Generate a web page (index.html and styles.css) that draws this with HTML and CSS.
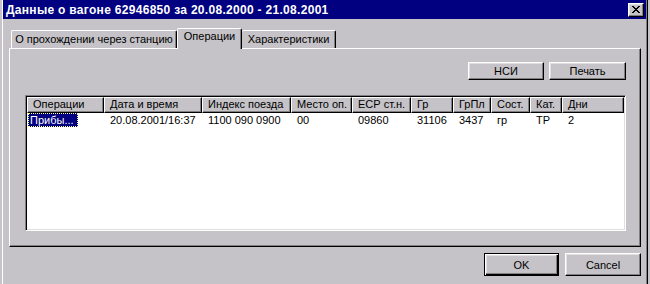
FILE: index.html
```html
<!DOCTYPE html>
<html lang="ru">
<head>
<meta charset="utf-8">
<title>Данные о вагоне</title>
<link rel="stylesheet" href="styles.css">
</head>
<body>
<div class="window">
  <div class="titlebar">
    <span class="title">Данные о вагоне 62946850 за 20.08.2000 - 21.08.2001</span>
    <button class="close" aria-label="Закрыть">
      <svg width="8" height="7" viewBox="0 0 8 7"><path d="M0 0h2v1H0zM6 0h2v1H6zM1 1h2v1H1zM5 1h2v1H5zM2 2h4v1H2zM3 3h2v1H3zM2 4h4v1H2zM1 5h2v1H1zM5 5h2v1H5zM0 6h2v1H0zM6 6h2v1H6z" fill="#000"/></svg>
    </button>
  </div>
  <div class="tabs">
    <div class="tab tab-first">О прохождении через станцию</div>
    <div class="tab tab-active">Операции</div>
    <div class="tab tab-third">Характеристики</div>
  </div>
  <div class="panel">
    <div class="toolbar">
      <button class="btn btn-nsi">НСИ</button>
      <button class="btn btn-print">Печать</button>
    </div>
    <div class="list">
      <div class="grid header">
        <div class="hcell">Операции</div>
        <div class="hcell">Дата и время</div>
        <div class="hcell">Индекс поезда</div>
        <div class="hcell">Место оп.</div>
        <div class="hcell">ЕСР ст.н.</div>
        <div class="hcell">Гр</div>
        <div class="hcell">ГрПл</div>
        <div class="hcell">Сост.</div>
        <div class="hcell">Кат.</div>
        <div class="hcell">Дни</div>
      </div>
      <div class="grid row">
        <div class="cell first"><span class="selected">Прибы...</span></div>
        <div class="cell">20.08.2001/16:37</div>
        <div class="cell">1100 090 0900</div>
        <div class="cell">00</div>
        <div class="cell">09860</div>
        <div class="cell">31106</div>
        <div class="cell">3437</div>
        <div class="cell">гр</div>
        <div class="cell">ТР</div>
        <div class="cell">2</div>
      </div>
    </div>
  </div>
  <div class="footer">
    <button class="btn btn-ok">OK</button>
    <button class="btn btn-cancel">Cancel</button>
  </div>
</div>
</body>
</html>
```
FILE: styles.css
```css
* { box-sizing: border-box; }
html, body { margin: 0; }
body {
  width: 650px;
  height: 284px;
  overflow: hidden;
  padding-left: 2px;
  background: #c5c3c7;
  font: 11px "Liberation Sans", Arial, sans-serif;
  color: #000;
}
.window {
  width: 646px;
  height: 284px;
  border-left: 1px solid #fff;
  border-right: 1px solid #000;
  box-shadow: inset -1px 0 #808080;
  display: flex;
  flex-direction: column;
}
.titlebar {
  height: 19px;
  background: #000080;
  display: flex;
  align-items: center;
  justify-content: space-between;
  padding: 0 2px 0 3px;
  margin-right: 1px;
}
.title {
  color: #fff;
  font-weight: bold;
  font-size: 12px;
  letter-spacing: 0.3px;
}
.close {
  width: 16px;
  height: 14px;
  padding: 0;
  margin: 0;
  background: #c5c3c7;
  border: 1px solid;
  border-color: #fff #000 #000 #fff;
  box-shadow: inset -1px -1px #808080, inset 1px 1px #dfdfdf;
  display: flex;
  align-items: center;
  justify-content: center;
}
.close svg { display: block; }
.tabs {
  display: flex;
  align-items: flex-end;
  height: 20px;
  margin-top: 9px;
  padding-left: 8px;
}
.tab {
  height: 18px;
  border-top: 1px solid #fff;
  border-left: 1px solid #fff;
  border-right: 1px solid #000;
  box-shadow: inset -1px 0 #808080;
  border-radius: 2px 2px 0 0;
  text-align: center;
  line-height: 16px;
  white-space: nowrap;
  background: #c5c3c7;
}
.tab-first { width: 166px; }
.tab-active {
  width: 65px;
  height: 21px;
  margin-bottom: -1px;
  position: relative;
  z-index: 1;
  line-height: 15px;
}
.tab-third { width: 94px; border-left: none; }
.panel {
  margin-left: 6px;
  width: 632px;
  height: 199px;
  border: 1px solid;
  border-color: #fff #000 #000 #fff;
  box-shadow: inset -1px -1px #808080;
  padding: 13px 14px 15px 15px;
  display: flex;
  flex-direction: column;
}
.toolbar {
  display: flex;
  justify-content: flex-end;
  gap: 5px;
  margin-bottom: 15px;
}
.btn {
  font: 11px "Liberation Sans", Arial, sans-serif;
  color: #000;
  background: #c5c3c7;
  border: 1px solid;
  border-color: #fff #000 #000 #fff;
  box-shadow: inset -1px -1px #808080, inset 1px 1px #dfdfdf;
  padding: 0;
  margin: 0;
}
.btn-nsi { width: 76px; height: 18px; }
.btn-print { width: 77px; height: 18px; }
.list {
  width: 601px;
  height: 136px;
  background: #fff;
  border: 1px solid;
  border-color: #808080 #fff #fff #808080;
  box-shadow: inset 1px 1px #000, inset -1px -1px #dfdfdf;
  padding: 1px;
}
.grid {
  display: grid;
  grid-template-columns: 77px 98px 89px 61px 59px 42px 38px 39px 32px 62px;
}
.header { height: 16px; }
.hcell {
  background: #c5c3c7;
  border-top: 1px solid #fff;
  border-left: 1px solid #fff;
  border-right: 1px solid #000;
  border-bottom: 1px solid #000;
  box-shadow: inset -1px -1px #808080;
  padding-left: 5px;
  line-height: 13px;
  white-space: nowrap;
  overflow: hidden;
}
.row { height: 14px; }
.cell {
  padding-left: 6px;
  line-height: 14px;
  white-space: nowrap;
}
.cell.first { padding-left: 1px; }
.selected {
  display: inline-block;
  width: 50px;
  height: 14px;
  background: #000080;
  color: #fff;
  outline: 1px dotted #ffff80;
  outline-offset: -1px;
  padding-left: 2px;
  line-height: 14px;
}
.footer {
  display: flex;
  justify-content: flex-end;
  gap: 6px;
  margin-top: 6px;
  padding-right: 6px;
}
.btn-ok {
  width: 75px;
  height: 23px;
  border: 1px solid #000;
  box-shadow: inset 1px 1px #fff, inset -1px -1px #000, inset -2px -2px #808080, inset 2px 2px #dfdfdf;
}
.btn-cancel { width: 76px; height: 23px; }
```
